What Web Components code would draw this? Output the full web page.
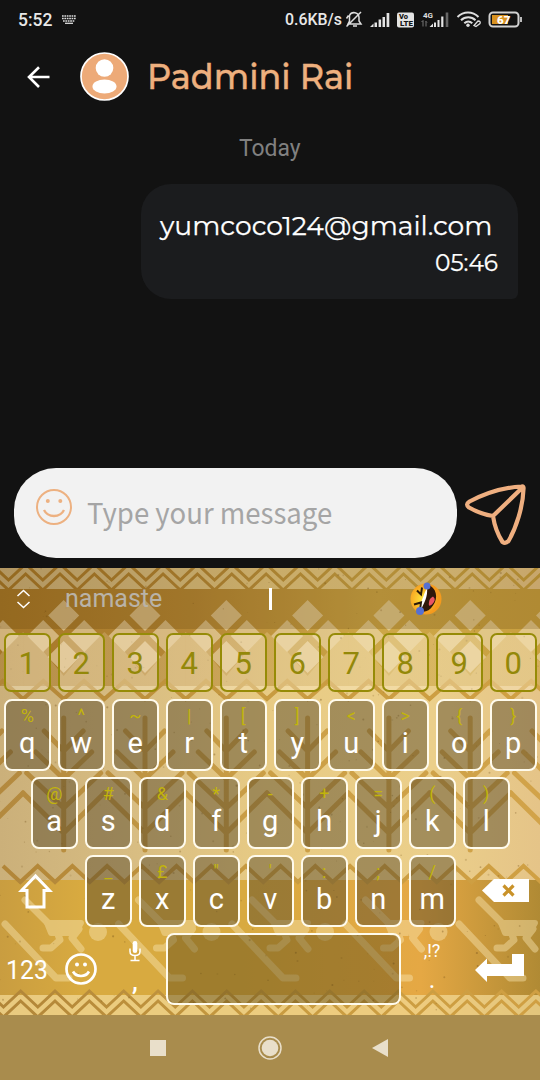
<!DOCTYPE html>
<html lang="en"><head><meta charset="utf-8"><title>Chat</title>
<style>html,body{margin:0;background:#121212}body{width:540px;height:1080px;overflow:hidden}</style></head>
<body><chat-screen></chat-screen>
<script>
const define=(name,css,html,after)=>customElements.define(name,class extends HTMLElement{
  connectedCallback(){
    if(this.shadowRoot)return;
    const r=this.attachShadow({mode:'open'});
    r.innerHTML=`<style>*{box-sizing:border-box}svg{display:block;flex:none}${css}</style>${typeof html==='function'?html(this):html}`;
    if(after)after(this,r);
  }
});

// One line of text stretched to a given width.
define('fit-text',':host{display:block;white-space:nowrap}span{display:inline-block;transform-origin:0 50%}','<span><slot></slot></span>',(el,r)=>{
  const s=r.querySelector('span'),w=+el.getAttribute('w');
  el.style.width=w+'px';
  const n=s.offsetWidth;if(n)s.style.transform=`scaleX(${w/n})`;
});

define('status-bar',`:host{display:flex;height:40px;align-items:center;color:#e8e8e8;font:500 17px Roboto,sans-serif;padding:0 17px 0 18px}
 .k{margin-left:9px}.s{flex:1}fit-text{margin-top:-2px}`,
`<fit-text w="34" style="font-size:18px">5:52</fit-text>
<svg class="k" width="16" height="10" viewBox="0 0 16 10"><path d="M1 1H15M1 3.5H15M2 6H14" stroke="#ddd" stroke-width="1.7" stroke-dasharray="1.7 .7"/><path d="M4 8.3H12" stroke="#ddd" stroke-width="1.3"/></svg>
<span class="s"></span>
<fit-text w="57" style="font-size:17px">0.6KB/s</fit-text>
<svg width="178" height="24" viewBox="342 7.500 178 24" fill="none" stroke="#ddd">
<path d="M348 23.5H361L359 20.500V17a5 5 0 0 0-9.500-2L349.500 20.500ZM353 25.500H357M346.500 26 361 11.500M348.500 15 346.500 18" stroke-width="1.5"/>
<g fill="#e4e4e4" stroke="none"><path d="M370 26.500h3.500v-3.500zM374.500 22h2.500v4.500h-2.500zM378.600 19h2.500v7.500h-2.500zM382.500 16.500h2.500v10h-2.500zM386.600 12.500h2.700v14h-2.700z"/><rect x="397" y="12" width="17" height="15" rx="2"/>
<path d="M429.500 26.500l3.500-3.500v3.500zM434 22h2v4.500h-2zM437.500 19.500h2v7h-2z"/><path d="M441.200 16h2.200v10.500h-2.200z"/><path d="M445.700 12h2.600v14.500h-2.600z" fill="#666"/></g>
<g fill="#151515" stroke="none" font-family="Roboto" font-weight="900"><text x="399" y="18.700" font-size="7.500">Vo</text><text x="400" y="25.700" font-size="7.500" textLength="13" lengthAdjust="spacingAndGlyphs">LTE</text></g>
<text x="423" y="17" fill="#ddd" stroke="none" font-family="Roboto" font-weight="700" font-size="8">4G</text>
<path d="M423 20v6M421.500 21.500 423 20M426 20.500V26M427 22l-1-1" stroke="#777" stroke-width="1"/>
<path d="M457.500 16.500c6-6 15-6 21 0M461 19.800c4-4 10.500-4 14.500 0M464.300 22.800c2.500-2.300 5.500-2.300 8 0" stroke-width="2"/><circle cx="468" cy="24.800" r="1.700" fill="#ddd" stroke="none"/><path d="m474 25 4-4.500q3 0 2 2.500l-4 3z" stroke-width="1.300" fill="#121212"/>
<rect x="489.500" y="12" width="29" height="14" rx="3.500" stroke="#d2d2d2" stroke-width="2"/><rect x="492" y="14.500" width="16" height="9" fill="#d99220" stroke="none"/><text x="497" y="23.300" font-family="Roboto" font-size="11.500" font-weight="900" fill="#fff" stroke="none">67</text></svg>
<svg width="3" height="12" viewBox="0 0 3 12"><path d="M1 3v5" stroke="#bbb" stroke-width="2"/></svg>`);

define('chat-header',`:host{display:flex;align-items:center;height:73px;padding-left:27px;color:#eeb07e;font:500 36px/46px Montserrat,Inter,sans-serif;-webkit-text-stroke:.4px #eeb07e}
.a{margin-left:30px}.n{margin-left:18px;margin-top:-1px}`,
`<svg width="23" height="22" viewBox="0 0 23 22"><path d="M22.500 11H2.200M12 1.200 2 11l10 10" fill="none" stroke="#fff" stroke-width="2.600"/></svg>
<svg class="a" width="49" height="49" viewBox="0 0 49 49"><circle cx="24.500" cy="24.500" r="23.500" fill="#edaa78" stroke="#fff" stroke-width="1.700"/><circle cx="24.500" cy="16" r="8.800" fill="#fff"/><ellipse cx="24.500" cy="34.500" rx="12" ry="7" fill="#fff"/></svg>
<fit-text class="n" w="206"><slot></slot></fit-text>`);

define('message-bubble',`:host{display:flex;flex-direction:column;width:377px;height:115px;margin:22px 0 0 141px;padding:24px 20px 0 19px;border-radius:30px 30px 6px 30px;background:#1b1c1e;color:#fff;font:400 27px/36px Montserrat,Inter,sans-serif;-webkit-text-stroke:.25px #fff}
.t{font-size:24px;align-self:flex-end;line-height:36px;margin-top:1px}`,
`<fit-text w="332"><slot></slot></fit-text><fit-text class="t" w="63"><slot name="time"></slot></fit-text>`);

define('message-input',`:host{display:flex;height:100.500px}.b{display:flex;width:443px;height:90px;margin-left:14px;background:#f2f2f2;border-radius:42px;padding:0 0 0 21px}
.e{margin-top:20px}.p{margin:23px 0 0 14px;color:#a5a5a5;font:400 29px/40px "Noto Sans CJK JP",sans-serif}.s{margin:13px 0 0 6px}`,
`<div class="b"><svg class="e" width="38" height="38" viewBox="0 0 38 38" fill="none" stroke="#edb181" stroke-width="2"><circle cx="19" cy="19" r="17"/><path d="M9 22c4 8 16 8 20 0" stroke-width="2.300"/><g fill="#edb181" stroke="none"><circle cx="12.800" cy="13" r="2"/><circle cx="25.300" cy="13" r="2"/></g></svg><fit-text class="p" w="245">Type your message</fit-text></div>
<svg class="s" width="66" height="66" viewBox="463 480 66 66" fill="none" stroke="#efaf80" stroke-width="4.200" stroke-linejoin="round"><path d="M521.500 485.500C501 486.500 484 493 469.500 500.500Q465 503.500 469 506.500C477 511 485 514 493 515C494.500 525 498 534 502.500 541Q505.500 543 508.500 540C516 527 523 506 523.500 488Q524 485 521.500 485.500ZM493 515 522 487"/></svg>`);

define('suggestion-bar',`:host{display:flex;height:61px;align-items:center;background:rgba(78,49,0,.2);padding-left:16px;color:#b9b3a8;font:25px/30px Roboto,sans-serif}
.w{margin-left:34px}.c{width:3px;height:22px;background:#fff;margin-left:107px}.e{margin-left:136px}`,
`<svg width="15" height="20" viewBox="0 0 15 20"><path d="m1.500 7 6-5.500 6 5.500M1.500 13l6 5.500 6-5.500" fill="none" stroke="#fff" stroke-width="1.500"/></svg>
<fit-text class="w" w="97">namaste</fit-text><span class="c"></span>
<svg class="e" width="34" height="36" viewBox="408 580.500 34 36"><defs><radialGradient id="g" cx=".4"><stop stop-color="#ffe83c"/><stop offset="1" stop-color="#f59a1d"/></radialGradient></defs><circle cx="426" cy="598.500" r="15.500" fill="url(#g)"/><path d="M428 584c8 3 11 13 5 21-3 5-8 7-11 6-3-5 5-13 6-27" fill="#30180b"/><path d="M427 588c1 8-3 15-6 21l-2-3c4-7 5-14 8-18" fill="#fff"/><path d="M433 596q4 3-1 8-4 3-3-2 0-4 4-6" fill="#ec5563"/><path d="m417 590 4 4 1-7M414 604l7-2-1 7" fill="none" stroke="#2b1b0a" stroke-width="2"/><circle cx="427" cy="585.500" r="3.500" fill="#5570d2"/><circle cx="420" cy="610.500" r="4" fill="#5570d2"/></svg>`);

define('key-cap',`:host{display:block;width:46.500px;height:72px;flex:none;border:2.400px solid #fffbed;border-radius:8px;background:rgba(80,68,40,.46);color:#fff;text-align:center;font:29px/30px Roboto,sans-serif}
:host([num]){height:59px;border-color:#968b07;background:rgba(255,242,210,.36);color:#938809;border-radius:7px;font-size:31px;line-height:57px}
:host([space]){width:235px;background:rgba(80,65,20,.42)}
i{display:block;font-style:normal;font-size:18px;line-height:20px;height:20px;color:#c2b40b;margin-top:5px}b{display:block;font-weight:400;margin-top:2px}`,
el=>el.hasAttribute('num')?'<slot></slot>':el.hasAttribute('space')?'':`<i>${el.getAttribute('alt').replace('&','&amp;').replace('<','&lt;')}</i><b><slot></slot></b>`);

define('key-row',':host{display:flex;gap:7.500px;height:72px}','<slot></slot>');

const tile=(x0,step,fn)=>{let s='';for(let x=x0;x<640;x+=step)s+=fn(x);return s};
const zig=(x0,step,top,bot)=>{let s='M'+x0+' '+top;for(let x=x0;x<600;x+=step)s+=`L${x+step/2} ${bot}L${x+step} ${top}`;return s};
define('folk-pattern',':host{display:block;width:540px;height:447px}',()=>{
  let dots='',n=7;const rnd=()=>(n=(n*16807)%2147483647)/2147483647;
  for(let i=0;i<330;i++)dots+=`<circle cx="${(rnd()*540).toFixed(1)}" cy="${(568+rnd()*447).toFixed(1)}" r="${(.4+rnd()*.7).toFixed(1)}" opacity="${(.12+rnd()*.25).toFixed(2)}"/>`;
  const grad=(id,stops)=>`<linearGradient id="${id}" gradientUnits="userSpaceOnUse" x1="0" y1="0" x2="540" y2="0">${stops.map(([o,c])=>`<stop offset="${o}" stop-color="${c}"/>`).join('')}</linearGradient>`;
  return `<svg width="540" height="447" viewBox="0 568 540 447"><defs>
${grad('c',[[0,'#cbb07a'],[.25,'#d8bd82'],[.5,'#e8cb84'],[.8,'#ebcf8a'],[1,'#e5c488']])}
${grad('b',[[0,'#a67728'],[.35,'#b58735'],[.7,'#cda748'],[1,'#c9a040']])}
${grad('l',[[0,'#b18538'],[.5,'#c89b40'],[1,'#d0a043']])}
${grad('d',[[0,'#c99d40'],[.15,'#d8aa40'],[.45,'#d8aa40'],[.78,'#e5a844'],[1,'#b08a34']])}</defs>
<path fill="url(#c)" d="M0 568H540V1015H0z"/>
<g fill="none" stroke="url(#b)" stroke-width="3"><path d="${zig(-8.700,34.350,564,580)}"/><path d="${zig(-8.700,34.350,574,590)}"/></g>
<path fill="url(#b)" d="M0 589H540V688H0z"/>
${tile(-17.600,81.300,x=>`<path d="M${x-40.600} 632L${x-20} 652L${x} 676L${x+20} 652L${x+40.700} 632V688H${x-40.600}z" fill="url(#c)" opacity=".4"/><g fill="#f4e3c0" fill-opacity=".55"><path d="M${x} 600l15.500 15.500-15.500 15.500-15.500-15.500zM${x-20.500} 620l16 16-16 16-16-16zM${x+20.500} 620l16 16-16 16-16-16zM${x} 641l16 16-16 16-16-16z"/></g>`)}
<path d="M0 686H540V700H0z" fill="url(#c)"/>
<path d="${zig(-17.600,40.650,699,681)}" stroke="url(#l)" stroke-width="4" fill="none"/>
<g fill="none" stroke="url(#l)" stroke-width="5" stroke-linecap="round" stroke-linejoin="round" opacity=".9">
${tile(-17.600,81.300,x=>`<path d="M${x} 718V850M${x-19.500} 731l19.500 20 19.500-20M${x-28} 752l28 27 28-27M${x-37} 773l37 35 37-35M${x-40.650} 793l40.650 40 40.650-40"/>`)}</g>
<path fill="url(#d)" d="M0 880H540V1015H0z"/>
<path d="${zig(3,34.700,866,882)}" stroke="url(#l)" stroke-width="4" fill="none"/>
<g fill="none" stroke="#f8e5b0" stroke-width="7" stroke-linecap="round" stroke-linejoin="round" opacity=".45">
${tile(-108.500,113.500,x=>`<path d="M${x} 924l51 54h13M${x+20} 900l24 24M${x+51} 929l4 11-9 8h-8M${x+74} 929l-7 9 9 11"/><path d="M${x+42} 923h34l-6 10H${x+46}z" fill="#f8e5b0" stroke-width="6"/><circle cx="${x+93}" cy="932" r="9" fill="#f8e5b0" stroke="none"/>`)}</g>
<path fill="#f0d58e" fill-opacity=".8" d="M0 995H540V1015H0z"/>
<g fill="none" stroke="url(#l)" stroke-width="3"><path d="${zig(-13.700,34.350,991,1007)}"/><path d="${zig(-13.700,34.350,1001,1017)}"/></g>
<g fill="#6d4b16">${dots}</g></svg>`});

define('soft-keyboard',`:host{display:grid;height:447px;overflow:hidden;color:#fff}:host>*{grid-area:1/1}
.rows{display:flex;flex-direction:column}key-row{padding-left:4px;margin-bottom:6px}.n{height:59px;margin:4px 0 7px}.a{padding-left:31px}
.z{padding-left:18px;gap:0}.z key-cap{margin-right:7.500px}.shift{margin:18px 32px 0 0}.del{margin:23px 0 0 19px}
.bot{gap:0;margin:0;padding-left:6px;font:26px/30px Roboto,sans-serif}.num{margin-top:22px}.sm{margin:19px 0 0 16px}.mic{display:flex;flex-direction:column;align-items:center;width:68px;height:72px;line-height:26px;padding-left:6px}.mic svg{margin-top:8px}.mic b{margin-top:6px;font-weight:500}
.dot{width:62px;display:flex;flex-direction:column;align-items:center;font-size:18px;line-height:24px}.dot span{margin-top:6px}.dot b{font-size:25px;font-weight:400;margin-top:5px}.ent{margin:20px 0 0 12px}`,
()=>{
 const k=(s,alts)=>[...s].map((c,i)=>`<key-cap alt="${alts[i].replace('&','&amp;').replace('<','&lt;').replace('"','&quot;')}">${c}</key-cap>`).join('');
 return `<folk-pattern></folk-pattern><div class="rows"><suggestion-bar></suggestion-bar>
<key-row class="n">${[...'1234567890'].map(c=>`<key-cap num>${c}</key-cap>`).join('')}</key-row>
<key-row>${k('qwertyuiop','%^~|[]<>{}')}</key-row>
<key-row class="a">${k('asdfghjkl','@#&*-+=()')}</key-row>
<key-row class="z"><svg class="shift" width="35" height="37" viewBox="0 0 35 37"><path d="M17.500 3 3.500 17.500H9V34H26V17.500h5.500z" fill="none" stroke="#fff" stroke-width="3"/></svg>${k('zxcvbnm',`_£"':;/`)}
<svg class="del" width="48" height="25" viewBox="0 0 48 25"><path d="M0 12.500 12 1H47V24H12z" fill="#fff"/><path d="m21.500 7.500 10 10m0-10-10 10" stroke="#c99229" stroke-width="3.200"/></svg></key-row>
<key-row class="bot"><fit-text class="num" w="42">123</fit-text><svg class="sm" width="34" height="34" viewBox="0 0 34 34" fill="none" stroke="#fff" stroke-width="2.700"><circle cx="17" cy="17" r="14.500"/><path d="M9 19.500c3.500 6 12.500 6 16 0"/><g fill="#fff" stroke="none"><circle cx="13" cy="12.500" r="2"/><circle cx="21" cy="12.500" r="2"/></g></svg>
<div class="mic"><svg width="12" height="21" viewBox="0 0 12 21"><rect x="3.700" width="4.600" height="12" rx="2.300" fill="#fff"/><path d="M1 7.500v3q0 4 5 4t5-4v-3M6 14v5M1.500 19.500h9" fill="none" stroke="#fff" stroke-width="1.500"/></svg><b>,</b></div>
<key-cap space></key-cap><div class="dot"><span>,!?</span><b>.</b></div>
<svg class="ent" width="50" height="30" viewBox="0 0 50 30"><path d="M0 17 12 5.500V11H37V1H49V23H12v6z" fill="#fff"/></svg></key-row></div>`});

define('nav-bar',':host{display:flex;height:65px;align-items:center;background:#a98c4d;padding-left:150px}.o{margin-left:91px}.b{margin-left:89px}',
`<svg width="16" height="16"><path d="M0 0H16V16H0z" fill="#e9dfca"/></svg><svg class="o" width="26" height="26" viewBox="0 0 26 26"><circle cx="13" cy="13" r="11" fill="none" stroke="#e9dfca" stroke-width="1.500"/><circle cx="13" cy="13" r="8.300" fill="#e9dfca"/></svg><svg class="b" width="16" height="18"><path d="M0 9 16 0V18z" fill="#e9dfca"/></svg>`);

define('chat-screen',`:host{display:flex;flex-direction:column;width:540px;height:1080px;background:#121212}.day{margin:21px 0 0 239px;color:#808080;font:24px/28px Roboto,sans-serif}message-input{margin-top:auto}`,
`<status-bar></status-bar><chat-header>Padmini Rai</chat-header><fit-text class="day" w="62">Today</fit-text>
<message-bubble>yumcoco124@gmail.com<span slot="time">05:46</span></message-bubble><message-input></message-input><soft-keyboard></soft-keyboard><nav-bar></nav-bar>`);
</script></body></html>
